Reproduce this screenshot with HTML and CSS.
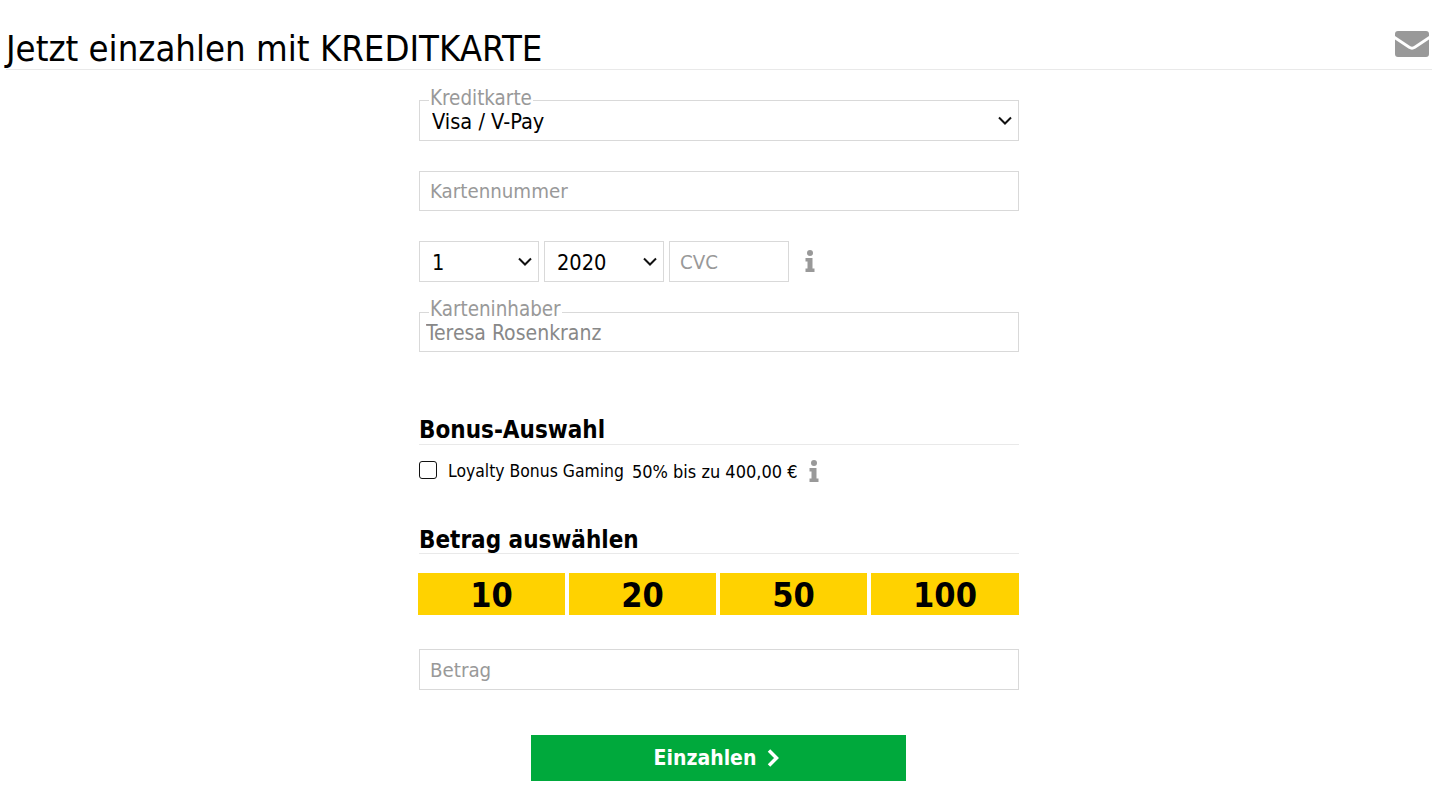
FILE: index.html
```html
<!DOCTYPE html>
<html lang="de">
<head>
   <meta charset="UTF-8">
   <title>Jetzt einzahlen mit KREDITKARTE</title>
   <link rel="stylesheet" href="styles.css">
</head>
<body>
   <div class="header">
       <h1>Jetzt einzahlen mit KREDITKARTE</h1>
       <svg class="mail-icon" viewBox="0 0 34 26" aria-hidden="true">
           <path d="M3 0H31A3 3 0 0 1 34 3V5L19 15Q17 16.300 15 15L0 5V3A3 3 0 0 1 3 0Z"/>
           <path d="M0 8.500L13.500 17.500Q17 19.800 20.500 17.500L34 8.500V23A3 3 0 0 1 31 26H3A3 3 0 0 1 0 23Z"/>
       </svg>
   </div>

   <form class="deposit-form">
       <div class="field">
           <label class="float-label" for="cardType">Kreditkarte</label>
           <select class="control select-wide" id="cardType">
               <option>Visa / V-Pay</option>
           </select>
       </div>

       <div class="field">
           <input class="control card-number" type="text" placeholder="Kartennummer">
       </div>

       <div class="field expiry-row">
           <select class="control select-small">
               <option>1</option>
           </select>
           <select class="control select-small">
               <option>2020</option>
           </select>
           <input class="control cvc" type="text" placeholder="CVC">
           <svg class="info-icon info-cvc" viewBox="0 0 10 22" aria-hidden="true">
               <circle cx="5" cy="3" r="3"/>
               <path d="M0.500 8H7.500V18.500H9.500V22H0.500V18.500H2.500V11.500H0.500Z"/>
           </svg>
       </div>

       <div class="field">
           <label class="float-label label-holder" for="holder">Karteninhaber</label>
           <input class="control holder" id="holder" type="text" value="Teresa Rosenkranz">
       </div>

       <h2 class="section-title bonus-title">Bonus-Auswahl</h2>
       <div class="bonus-row">
           <input class="bonus-check" type="checkbox" id="bonus">
           <label class="bonus-name" for="bonus">Loyalty Bonus Gaming</label>
           <span class="bonus-detail">50% bis zu 400,00 €</span>
           <svg class="info-icon info-bonus" viewBox="0 0 10 22" aria-hidden="true">
               <circle cx="5" cy="3" r="3"/>
               <path d="M0.500 8H7.500V18.500H9.500V22H0.500V18.500H2.500V11.500H0.500Z"/>
           </svg>
       </div>

       <h2 class="section-title amount-title">Betrag auswählen</h2>
       <div class="amount-grid">
           <button class="amount-btn" type="button">10</button>
           <button class="amount-btn" type="button">20</button>
           <button class="amount-btn" type="button">50</button>
           <button class="amount-btn" type="button">100</button>
       </div>

       <div class="field amount-field">
           <input class="control" type="text" placeholder="Betrag">
       </div>

       <button class="submit-btn" type="button">
           Einzahlen
           <svg viewBox="0 0 14 20" aria-hidden="true">
               <path d="M3 2.500L10.500 10L3 17.500"/>
           </svg>
       </button>
   </form>
</body>
</html>
```

FILE: styles.css
```css
* {
    margin: 0;
    padding: 0;
    box-sizing: border-box;
}

body {
    font-family: "DejaVu Sans Condensed", "DejaVu Sans", sans-serif;
    background-color: #fff;
    color: #000;
    overflow: hidden;
}

.header {
    display: flex;
    justify-content: space-between;
    align-items: flex-end;
    height: 70px;
    margin: 0 6px;
    border-bottom: 1px solid #e9e9e9;
}

.header h1 {
    font-size: 36.200px;
    font-weight: 400;
    line-height: 40px;
}

.mail-icon {
    width: 34px;
    height: 26px;
    fill: #999;
    margin: 0 3px 12px 0;
}

.deposit-form {
    width: 600px;
    margin: 0 auto;
}

.field {
    position: relative;
    margin-top: 30px;
}

.control {
    display: block;
    width: 100%;
    height: 41px;
    border: 1px solid #d9d9d9;
    border-radius: 0;
    background-color: #fff;
    font-family: inherit;
    font-size: 20.300px;
    color: #000;
    padding: 0 10px;
    outline: none;
}

.card-number {
    height: 40px;
}

.control::placeholder {
    color: #999;
    opacity: 1;
}

select.control {
    appearance: none;
    font-size: 21.600px;
    padding-top: 2px;
    background-image: url("data:image/svg+xml,%3Csvg xmlns='http://www.w3.org/2000/svg' width='14' height='9'%3E%3Cpath d='M1 1.500L7 7.500L13 1.500' fill='none' stroke='%23111' stroke-width='2'/%3E%3C/svg%3E");
    background-repeat: no-repeat;
    background-position: right 6px center;
}

.select-wide {
    padding-left: 12px;
}

.float-label {
    position: absolute;
    left: 10px;
    top: -13px;
    padding: 0 1px;
    background-color: #fff;
    font-size: 20.400px;
    line-height: 22px;
    color: #999;
}

.label-holder {
    top: -14px;
}

.expiry-row {
    display: flex;
    align-items: center;
    gap: 5px;
}

.select-small {
    width: 120px;
    padding-left: 12px;
}

.cvc {
    width: 120px;
}

.info-icon {
    width: 10px;
    height: 22px;
    fill: #999;
    flex-shrink: 0;
}

.info-cvc {
    margin-left: 11px;
    margin-top: -2px;
}

.control.holder {
    height: 40px;
    padding: 2px 0 0 6px;
    font-size: 21px;
    color: #888;
}

.section-title {
    font-size: 24px;
    font-weight: 700;
    border-bottom: 1px solid #e9e9e9;
}

.bonus-title {
    line-height: 27px;
    margin-top: 65px;
}

.bonus-row {
    display: flex;
    align-items: center;
    height: 18px;
    margin-top: 16px;
    font-size: 18px;
}

.bonus-check {
    appearance: none;
    width: 18px;
    height: 18px;
    border: 1.500px solid #111;
    border-radius: 3px;
    background-color: #fff;
    margin-right: 11px;
}

.bonus-name {
    font-size: 17.400px;
    margin-top: 2px;
}

.bonus-detail {
    margin: 2px 0 0 8px;
}

.info-bonus {
    margin-left: 12px;
    margin-top: 2px;
}

.amount-title {
    line-height: 25px;
    margin-top: 49px;
}

.amount-grid {
    display: grid;
    grid-template-columns: 147px 147px 147px 148px;
    gap: 4px;
    margin: 19px 0 0 -1px;
}

.amount-btn {
    height: 42px;
    border: none;
    padding-top: 2px;
    background-color: #ffd200;
    font-family: inherit;
    font-size: 34px;
    font-weight: 700;
    color: #000;
}

.amount-field {
    margin-top: 34px;
}

.submit-btn {
    display: flex;
    align-items: center;
    justify-content: center;
    gap: 10px;
    width: 375px;
    height: 46px;
    margin: 45px 0 0 112px;
    padding-right: 3px;
    border: none;
    background-color: #00a93c;
    font-family: inherit;
    font-size: 21px;
    font-weight: 700;
    color: #fff;
}

.submit-btn svg {
    width: 14px;
    height: 20px;
    fill: none;
    stroke: #fff;
    stroke-width: 3.500;
}
```
